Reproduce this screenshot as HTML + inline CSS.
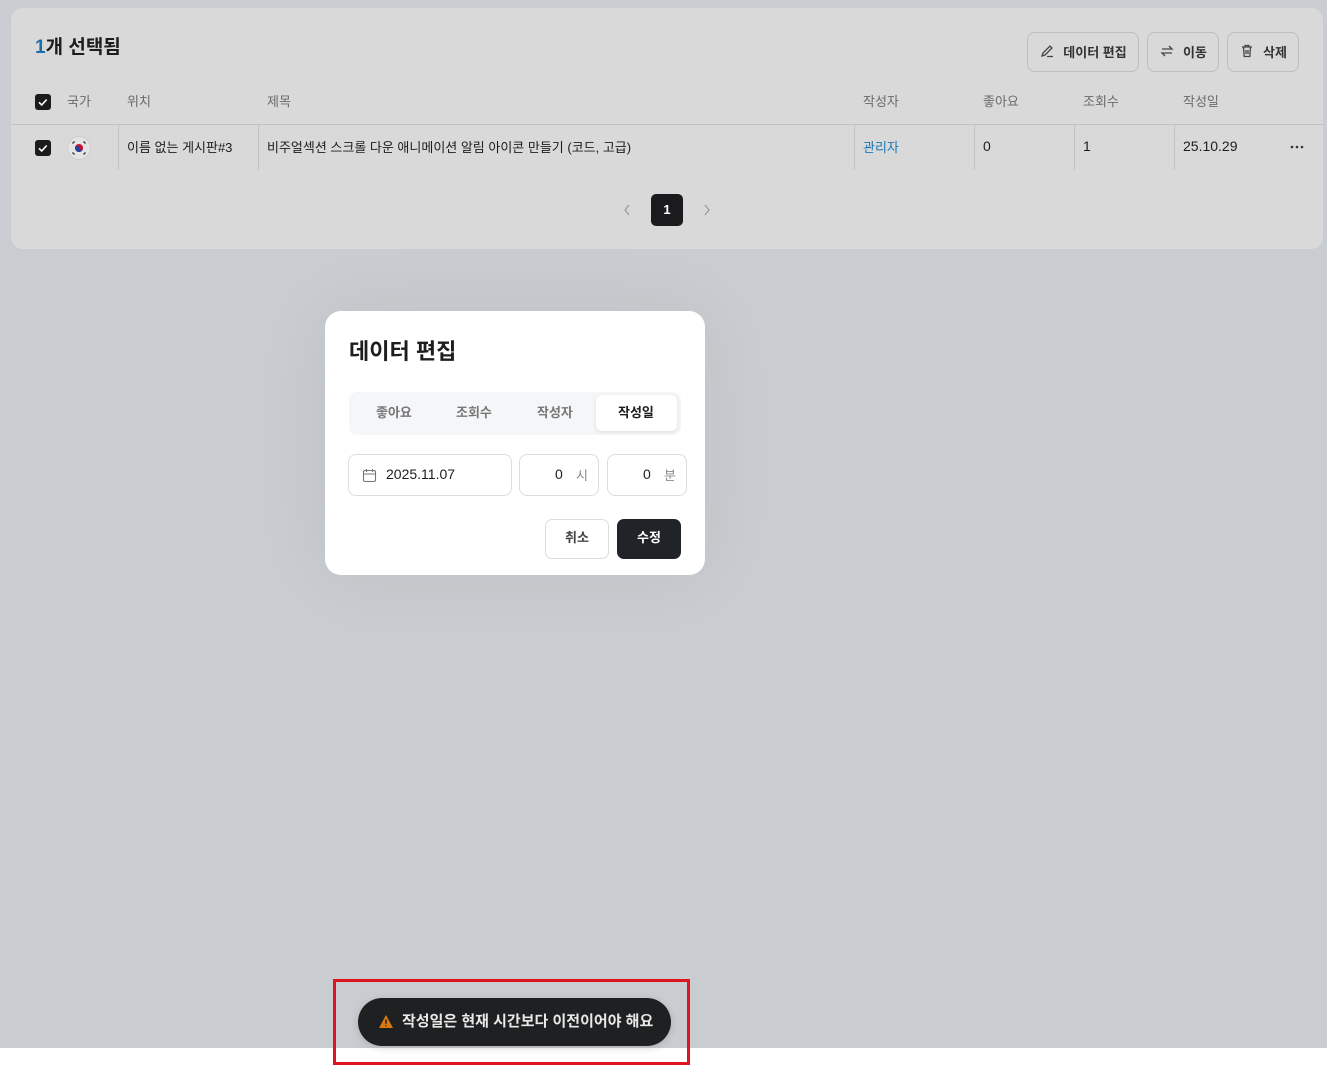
<!DOCTYPE html>
<html><head><meta charset="utf-8"><style>
*{box-sizing:border-box;margin:0;padding:0}
body{width:1327px;height:1065px;background:#fff;font-family:"Liberation Sans","Noto Sans CJK KR",sans-serif;position:relative;overflow:hidden;color:#1c1d1f}
.ov{position:absolute;left:0;top:0;width:1327px;height:1048px;background:#c9ccd0}
.card{position:absolute;left:11px;top:8px;width:1312px;height:241px;background:#d9d9d9;border-radius:12px}
.abs{position:absolute;white-space:nowrap}
.btn{position:absolute;top:32px;height:40px;border:1px solid #bfbfbf;border-radius:8px;font-size:13px;font-weight:700;color:#333;display:flex;align-items:center;justify-content:center;gap:8px;padding-bottom:2px}
.cb{position:absolute;width:16px;height:16px;background:#1b1b1d;border-radius:3px}
.cb svg{display:block}
.th{position:absolute;top:91px;font-size:13px;color:#6a6a6a}
.td{position:absolute;top:137px;font-size:13px;color:#1c1d1f}
.num{font-size:14px;top:138px}
.vl{position:absolute;top:125px;width:1px;height:45px;background:#c3c3c3}
.modal{position:absolute;left:325px;top:311px;width:380px;height:264px;background:#fff;border-radius:16px;box-shadow:0 0 80px rgba(0,0,0,.06)}
.inp{position:absolute;top:143px;height:42px;border:1px solid #dcdde0;border-radius:8px;font-size:14px}
</style></head><body>
<div class="ov"></div>
<div class="card"></div>
<div class="abs" style="left:35px;top:32px;font-size:19px;font-weight:700;color:#1c1d1f"><span style="color:#1a6fa8">1</span>개 선택됨</div>
<div class="btn" style="left:1027px;width:112px"><svg width="16" height="16" viewBox="0 0 16 16" fill="none" stroke="#444" stroke-width="1.3"><path d="M3 13l1-3 7-7 2 2-7 7-3 1zM8 13.5h6"/></svg>데이터 편집</div>
<div class="btn" style="left:1147px;width:72px"><svg width="16" height="16" viewBox="0 0 16 16" fill="none" stroke="#444" stroke-width="1.3"><path d="M3 6h10l-3-3M13 10H3l3 3"/></svg>이동</div>
<div class="btn" style="left:1227px;width:72px"><svg width="16" height="16" viewBox="0 0 16 16" fill="none" stroke="#444" stroke-width="1.3"><path d="M3 4h10M6 4V2.5h4V4M4.5 4l.7 9.5h5.6l.7-9.5M7 7v4M9 7v4"/></svg>삭제</div>
<div class="cb" style="left:35px;top:94px"><svg width="16" height="16"><path d="M4 8.3l2.7 2.7 5-5.5" stroke="#fff" stroke-width="1.6" fill="none"/></svg></div>
<div class="th" style="left:67px">국가</div>
<div class="th" style="left:127px">위치</div>
<div class="th" style="left:267px">제목</div>
<div class="th" style="left:863px">작성자</div>
<div class="th" style="left:983px">좋아요</div>
<div class="th" style="left:1083px">조회수</div>
<div class="th" style="left:1183px">작성일</div>
<div class="abs" style="left:11px;top:124px;width:1312px;height:1px;background:#c3c3c3"></div>
<div class="vl" style="left:118px"></div><div class="vl" style="left:258px"></div><div class="vl" style="left:854px"></div><div class="vl" style="left:974px"></div><div class="vl" style="left:1074px"></div><div class="vl" style="left:1174px"></div>
<div class="cb" style="left:35px;top:140px"><svg width="16" height="16"><path d="M4 8.3l2.7 2.7 5-5.5" stroke="#fff" stroke-width="1.6" fill="none"/></svg></div>
<svg class="abs" style="left:67px;top:136px" width="24" height="24" viewBox="0 0 24 24"><circle cx="12" cy="12" r="11.5" fill="#e4e4e4" stroke="#cdcdcd"/><circle cx="12" cy="12" r="4" fill="#c8102e"/><path d="M8 12a4 4 0 0 0 8 0a2 2 0 0 1-4 0a2 2 0 0 0-4 0z" fill="#1f45a0"/><g stroke="#333" stroke-width="1.3"><path d="M5.5 7.5l2-2M16.5 5.5l2 2M5.5 16.5l2 2M16.5 18.5l2-2"/></g></svg>
<div class="td" style="left:127px">이름 없는 게시판#3</div>
<div class="td" style="left:267px">비주얼섹션 스크롤 다운 애니메이션 알림 아이콘 만들기 (코드, 고급)</div>
<div class="td" style="left:863px;color:#1a76b5">관리자</div>
<div class="td num" style="left:983px">0</div>
<div class="td num" style="left:1083px">1</div>
<div class="td num" style="left:1183px">25.10.29</div>
<svg class="abs" style="left:1290px;top:145px" width="14" height="4"><circle cx="2" cy="2" r="1.3" fill="#333"/><circle cx="7" cy="2" r="1.3" fill="#333"/><circle cx="12" cy="2" r="1.3" fill="#333"/></svg>
<svg class="abs" style="left:623px;top:204px" width="8" height="12" viewBox="0 0 8 12"><path d="M6 1L2 6l4 5" stroke="#999" fill="none" stroke-width="1.2"/></svg>
<div class="abs" style="left:651px;top:194px;width:32px;height:32px;background:#1b1b1d;border-radius:5px;color:#fff;font-size:13px;font-weight:700;text-align:center;line-height:32px">1</div>
<svg class="abs" style="left:703px;top:204px" width="8" height="12" viewBox="0 0 8 12"><path d="M2 1l4 5-4 5" stroke="#999" fill="none" stroke-width="1.2"/></svg>

<div class="modal">
<div class="abs" style="left:24px;top:23px;font-size:22px;font-weight:700">데이터 편집</div>
<div class="abs" style="left:24px;top:81px;width:332px;height:43px;background:#f5f6f8;border-radius:8px"></div>
<div class="abs" style="left:271px;top:84px;width:81px;height:36px;background:#fff;border-radius:6px;box-shadow:0 1px 4px rgba(0,0,0,.1)"></div>
<div class="abs" style="left:51px;top:91px;font-size:13px;font-weight:700;color:#777">좋아요</div>
<div class="abs" style="left:131px;top:91px;font-size:13px;font-weight:700;color:#777">조회수</div>
<div class="abs" style="left:212px;top:91px;font-size:13px;font-weight:700;color:#777">작성자</div>
<div class="abs" style="left:293px;top:91px;font-size:13px;font-weight:700;color:#1c1d1f">작성일</div>
<div class="inp" style="left:23px;width:164px"><svg class="abs" style="left:13px;top:13px" width="15" height="15" viewBox="0 0 15 15" fill="none" stroke="#777" stroke-width="1.1"><rect x="1.5" y="2.5" width="12" height="11" rx="1.5"/><path d="M1.5 6h12M4.5 1v3M10.5 1v3"/></svg><span class="abs" style="left:37px;top:11px">2025.11.07</span></div>
<div class="inp" style="left:194px;width:80px"><span class="abs" style="left:35px;top:11px">0</span><span class="abs" style="left:56px;top:10px;color:#888;font-size:13px">시</span></div>
<div class="inp" style="left:282px;width:80px"><span class="abs" style="left:35px;top:11px">0</span><span class="abs" style="left:56px;top:10px;color:#888;font-size:13px">분</span></div>
<div class="abs" style="left:220px;top:208px;width:64px;height:40px;border:1px solid #dcdde0;border-radius:7px;font-size:13px;font-weight:700;color:#444;text-align:center;line-height:36px">취소</div>
<div class="abs" style="left:292px;top:208px;width:64px;height:40px;background:#202327;border-radius:7px;font-size:13px;font-weight:700;color:#fff;text-align:center;line-height:38px">수정</div>
</div>

<div class="abs" style="left:358px;top:998px;width:313px;height:48px;background:#1f2021;border-radius:24px;box-shadow:0 2px 8px rgba(0,0,0,.15)"></div>
<svg class="abs" style="left:378px;top:1014px" width="16" height="15" viewBox="0 0 16 15"><path d="M8 1L15 14H1z" fill="#d97a0c"/><path d="M8 5.5v4.2M8 11.2v1" stroke="#1f2021" stroke-width="1.5"/></svg>
<div class="abs" style="left:402px;top:1010px;font-size:15px;font-weight:700;color:#e8e8e8">작성일은 현재 시간보다 이전이어야 해요</div>
<div class="abs" style="left:333px;top:979px;width:357px;height:86px;border:3px solid #e0141e"></div>
</body></html>
